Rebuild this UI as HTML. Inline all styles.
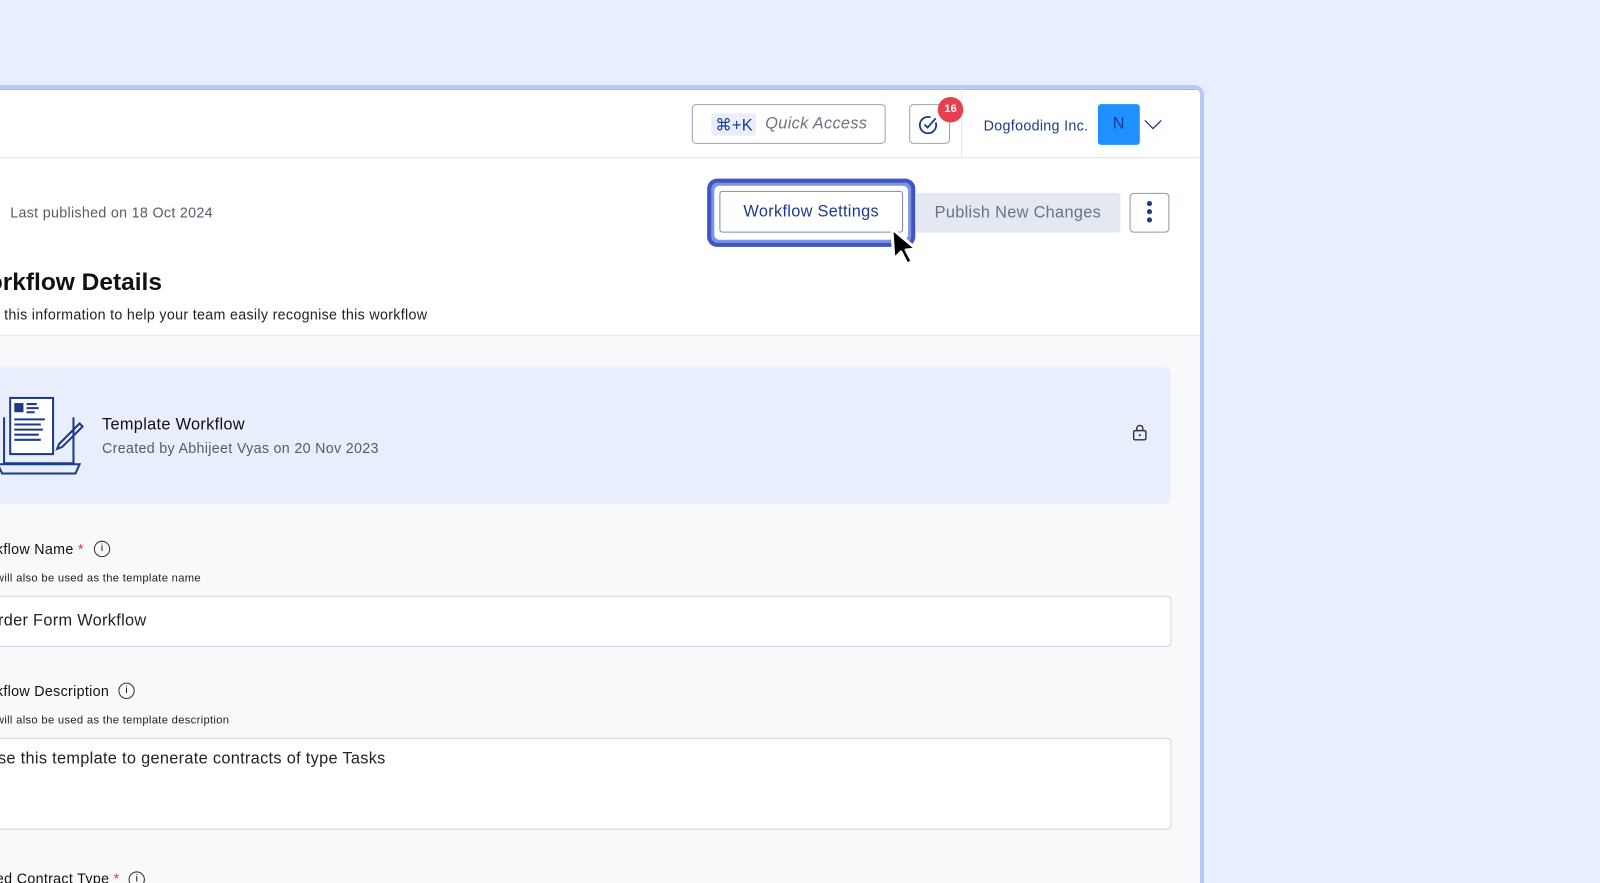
<!DOCTYPE html><html style="overflow:hidden;height:883px"><head><style>
body{margin:0;width:1600px;height:883px;background:#e8eefd;overflow:hidden;font-family:"Liberation Sans",sans-serif;position:relative}
.clip{position:absolute;left:0;top:0;width:1600px;height:883px;overflow:hidden}
.sc{position:absolute;left:0;top:0;width:1568px;height:865px;transform:scale(1.0204);transform-origin:0 0}
.win{position:absolute;left:-10px;top:83px;width:1186px;height:782px;border:4px solid #b9c8f0;border-left:none;border-bottom:none;border-radius:0 10px 0 0;background:#f8f9fb;overflow:hidden}
.a{position:absolute}
.t{white-space:nowrap;letter-spacing:0.3px}
.lo{position:absolute;left:0;top:-3px;width:1186px;height:800px}
</style></head><body><div class="clip"><div class="sc">
<div class="win">
 <div class="a" style="left:0;top:0;right:0;height:241px;background:#fff;border-bottom:1px solid #e1e4ea"></div>
 <div class="a" style="left:0;top:0;right:0;height:1px;background:#9aa0ae"></div>
 <div class="a" style="left:0;top:67px;right:0;height:1px;background:#e1e4ea"></div>
 <div class="a" style="left:952px;top:0;width:1px;height:67px;background:#e1e4ea"></div>
 <div class="a" style="left:688px;top:15px;width:188px;height:37px;border:1px solid #9aa3b5;border-radius:4px"></div>
 <div class="a" style="left:707px;top:24px;width:44px;height:22px;background:#e8eefc;border-radius:3px"></div>
 <div class="a t" style="left:711px;top:26px;font-size:16px;color:#1d3b8c">⌘+K</div>
 <div class="a t" style="left:760px;top:26px;font-size:16px;font-style:italic;color:#6b7280">Quick Access</div>
 <div class="a" style="left:901px;top:15px;width:38px;height:37px;border:1px solid #9aa3b5;border-radius:4px"></div>
 <svg class="a" style="left:909px;top:24px" width="22" height="22" viewBox="0 0 22 22"><path d="M18 9A8 8 0 1 1 13 4" fill="none" stroke="#1d3b8c" stroke-width="1.8"/><path d="M7 11l3 3 8-9" fill="none" stroke="#1d3b8c" stroke-width="1.8"/></svg>
 <div class="a t" style="left:929px;top:8px;width:25px;height:25px;border-radius:50%;background:#e5404f;color:#fff;font-size:11px;font-weight:bold;text-align:center;line-height:25px;letter-spacing:0">16</div>
 <div class="a t" style="left:974px;top:28px;font-size:14px;color:#1d3b8c">Dogfooding Inc.</div>
 <div class="a t" style="left:1086px;top:15px;width:41px;height:40px;background:#1e90ff;border-radius:3px;color:#1d3b8c;font-size:16px;text-align:center;line-height:40px">N</div>
 <svg class="a" style="left:1131px;top:30px" width="18" height="10"><path d="M1 1l8 8 8-8" fill="none" stroke="#1d3b8c" stroke-width="1.3"/></svg>
 <div class="lo">
 <div class="a t" style="left:20px;top:116px;font-size:14px;color:#555c68">Last published on 18 Oct 2024</div>
 <div class="a" style="left:703px;top:91px;width:204px;height:67px;border:4px solid #3d56c4;border-radius:10px;background:#7d92e0;box-sizing:border-box"></div>
 <div class="a" style="left:710px;top:98px;width:190px;height:53px;background:#fff;border-radius:5px"></div>
 <div class="a t" style="left:715px;top:103px;width:180px;height:41px;border:1px solid #7e89a6;border-radius:3px;box-sizing:border-box;text-align:center;line-height:39px;font-size:16px;color:#1d3b8c">Workflow Settings</div>
 <div class="a t" style="left:907px;top:105px;width:201px;height:39px;background:#e3e8f1;border-radius:3px;text-align:center;line-height:39px;font-size:16px;color:#6a7488">Publish New Changes</div>
 <div class="a" style="left:1117px;top:105px;width:39px;height:39px;border:1px solid #8e97ab;border-radius:4px;box-sizing:border-box"></div>
 <div class="a" style="left:1134px;top:113px;width:5px;height:5px;border-radius:50%;background:#1d3b8c;box-shadow:0 8px 0 #1d3b8c,0 16px 0 #1d3b8c"></div>
 <svg class="a" style="left:880px;top:136px" width="38" height="44" viewBox="0 0 38 44"><path d="M4 4L6 34 13 27 19 39 24 36 18 25 28 24Z" fill="#000" stroke="#fff" stroke-width="3" stroke-linejoin="round"/></svg>
 <div class="a t" style="left:-2px;top:179px;font-size:24px;font-weight:bold;color:#111;letter-spacing:0">orkflow Details</div>
 <div class="a t" style="left:14px;top:216px;font-size:14px;color:#222">this information to help your team easily recognise this workflow</div>
 <div class="a" style="left:0;top:276px;width:1157px;height:134px;background:#e9eefc;border-radius:0 4px 4px 0"></div>
 <svg class="a" style="left:8px;top:303px" width="84" height="80" viewBox="0 0 84 80"><g fill="none" stroke="#1d3b8c" stroke-width="2"><path d="M6 22v45h68V22"/><path d="M0 68h80l-4 9H4z"/><rect x="12" y="3" width="42" height="55" fill="#fff"/><path d="M28 9h10M28 13h12M28 17h8M16 24h30M16 29h26M16 34h28M16 39h24M16 44h26M60 48l20-20 3 3-20 20-5 2z"/></g><rect x="16" y="8" width="9" height="9" fill="#1d3b8c"/></svg>
 <div class="a t" style="left:110px;top:324px;font-size:16px;color:#111">Template Workflow</div>
 <div class="a t" style="left:110px;top:347px;font-size:14px;color:#555c68">Created by Abhijeet Vyas on 20 Nov 2023</div>
 <svg class="a" style="left:1120px;top:332px" width="14" height="16"><rect x="1" y="6" width="12" height="9" rx="1.5" fill="none" stroke="#333" stroke-width="1.4"/><path d="M4 6V4a3 3 0 0 1 6 0v2" fill="none" stroke="#333" stroke-width="1.4"/><circle cx="7" cy="10.5" r="1" fill="#333"/></svg>
 <div class="a t" style="left:6px;top:446px;font-size:14px;color:#111">kflow Name <span style="color:#e5404f">*</span></div>
 <div class="a t" style="left:102px;top:446px;width:14px;height:14px;border:1.3px solid #333;border-radius:50%;font-size:10px;text-align:center;line-height:14px;letter-spacing:0">i</div>
 <div class="a t" style="left:6px;top:477px;font-size:11px;color:#222">will also be used as the template name</div>
 <div class="a" style="left:0;top:500px;width:1156px;height:48px;background:#fff;border:1px solid #cfd4dc;border-radius:4px"></div>
 <div class="a t" style="left:8px;top:516px;font-size:16px;color:#222">rder Form Workflow</div>
 <div class="a t" style="left:6px;top:585px;font-size:14px;color:#111">kflow Description</div>
 <div class="a t" style="left:126px;top:585px;width:14px;height:14px;border:1.3px solid #333;border-radius:50%;font-size:10px;text-align:center;line-height:14px;letter-spacing:0">i</div>
 <div class="a t" style="left:6px;top:616px;font-size:11px;color:#222">will also be used as the template description</div>
 <div class="a" style="left:0;top:639px;width:1156px;height:88px;background:#fff;border:1px solid #cfd4dc;border-radius:4px"></div>
 <div class="a t" style="left:8px;top:651px;font-size:16px;color:#222">se this template to generate contracts of type Tasks</div>
 <div class="a t" style="left:6px;top:769px;font-size:14px;color:#111">ed Contract Type <span style="color:#e5404f">*</span></div>
 <div class="a t" style="left:136px;top:770px;width:14px;height:14px;border:1.3px solid #333;border-radius:50%;font-size:10px;text-align:center;line-height:14px;letter-spacing:0">i</div>
 </div>
</div>
</div></div></body></html>
